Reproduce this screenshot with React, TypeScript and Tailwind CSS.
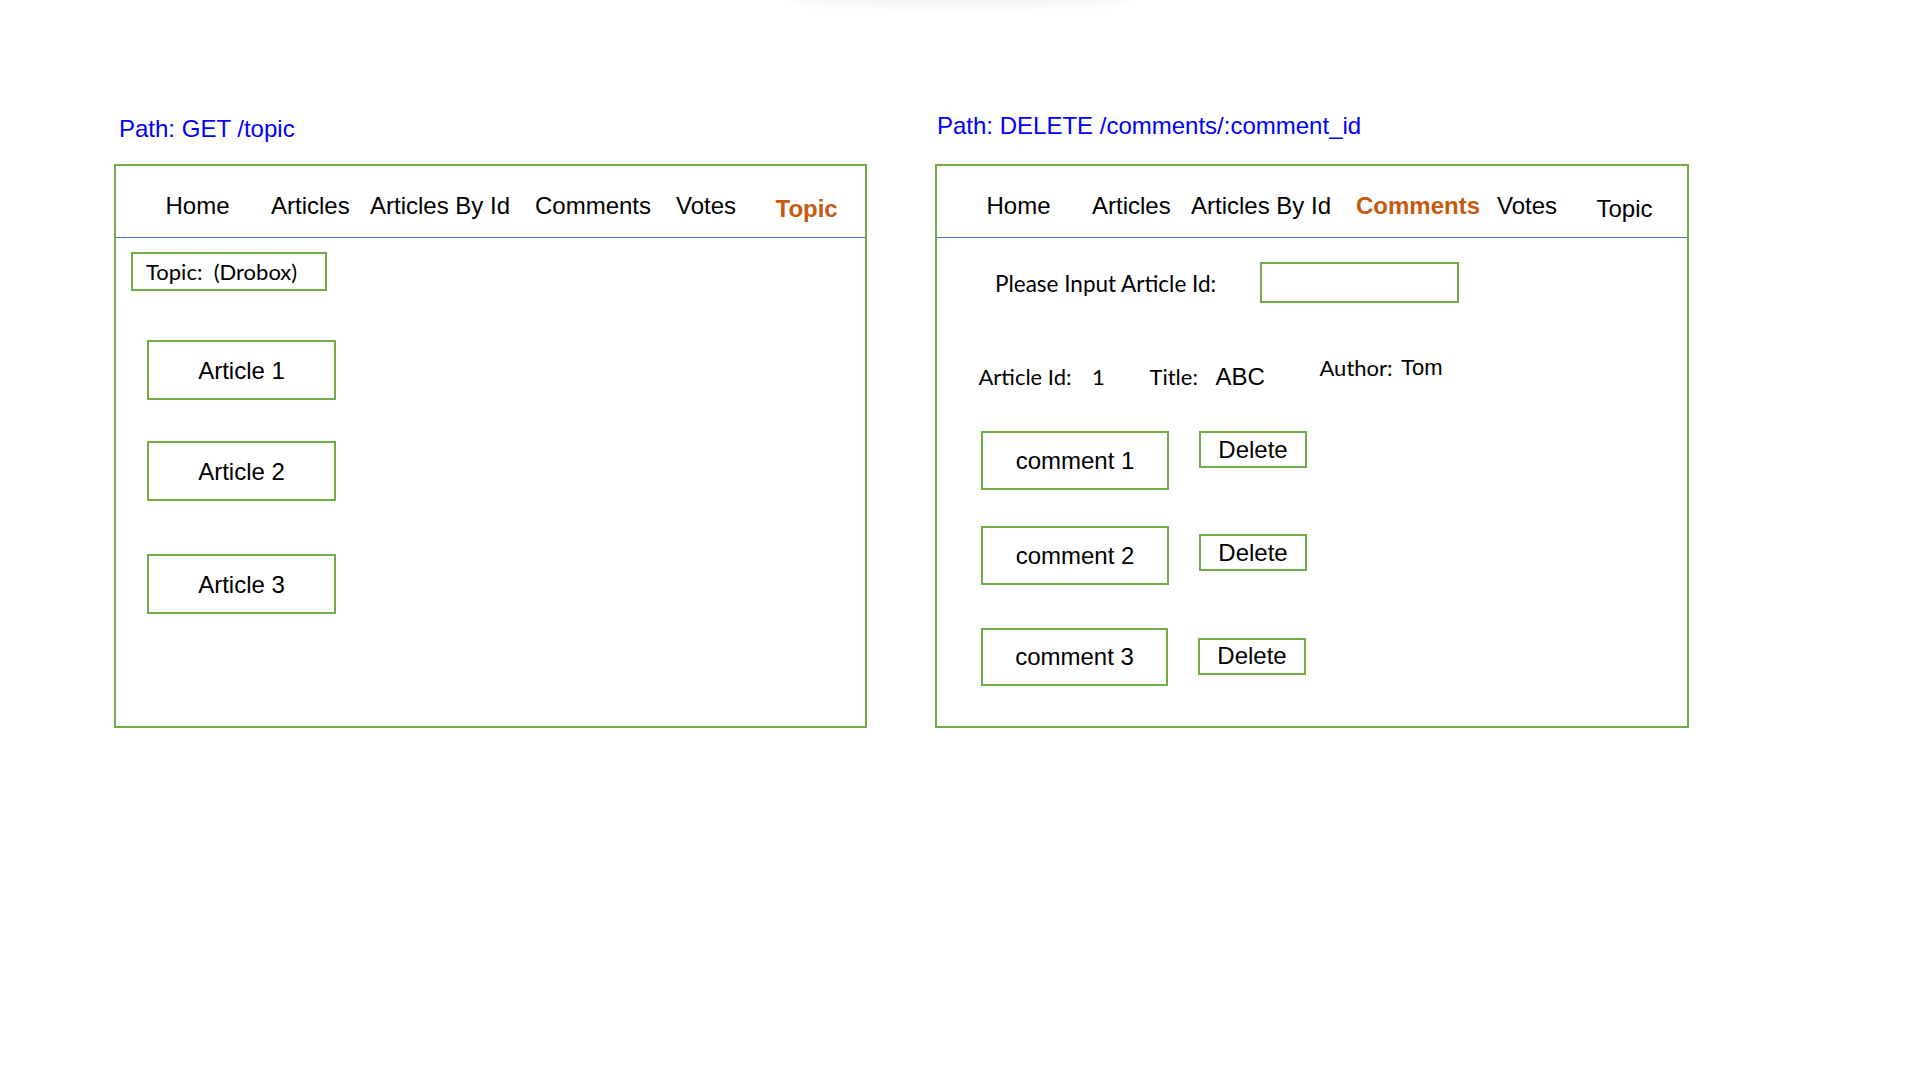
import clsx from "clsx";

const navSlots = [
  { label: "Home", slot: "w-[105.5px]" },
  { label: "Articles", slot: "w-[99px]" },
  { label: "Articles By Id", slot: "w-[165px]" },
  { label: "Comments", slot: "w-[141px]" },
  { label: "Votes", slot: "w-[99.5px]" },
  { label: "Topic", slot: "mt-[2.5px]" },
];

const articles = [
  { label: "Article 1", gap: "mt-[49px]" },
  { label: "Article 2", gap: "mt-[41px]" },
  { label: "Article 3", gap: "mt-[53px]" },
];

const comments = [
  { label: "comment 1", gap: "mt-[40.5px]", box: "h-[59px] w-[188px]", del: "mt-0" },
  { label: "comment 2", gap: "mt-[36px]", box: "h-[59px] w-[188px]", del: "mt-[8px]" },
  { label: "comment 3", gap: "mt-[43px]", box: "h-[58px] w-[187px]", del: "mt-[9.5px]" },
];

const NavBar = ({ active }: { active: string }) => (
  <div className="flex h-[72px] items-start border-b border-[#4472c4] pl-[49.5px] pt-[26px] text-[24px] leading-[28px] text-black">
    {navSlots.map((item) => (
      <span
        key={item.label}
        className={clsx(
          "shrink-0 whitespace-nowrap",
          item.slot,
          item.label === active && "font-bold text-[#c55a11]"
        )}
      >
        {item.label}
      </span>
    ))}
  </div>
);

const TopicPanel = () => (
  <div className="h-[564px] w-[753px] border-2 border-[#70ad47]">
    <NavBar active="Topic" />
    <div className="pl-[15px] pt-[14px]">
      <div className="flex h-[39px] w-[196px] items-center whitespace-pre border-2 border-[#70ad47] pl-[13px] font-['Lato',sans-serif] text-[22px] leading-[26px]">
        Topic:  (Drobox)
      </div>
      {articles.map((a) => (
        <div
          key={a.label}
          className={clsx(
            "ml-[16px] flex h-[60px] w-[189px] items-center justify-center border-2 border-[#70ad47] pt-[1px] text-[24px] leading-[28px]",
            a.gap
          )}
        >
          {a.label}
        </div>
      ))}
    </div>
  </div>
);

const CommentsPanel = () => (
  <div className="h-[564px] w-[754px] border-2 border-[#70ad47]">
    <NavBar active="Comments" />
    <div className="pt-[24px]">
      <div className="flex items-center pl-[58px]">
        <span className="w-[265px] pt-[3px] font-['Lato',sans-serif] text-[22.5px] leading-[28px]">
          Please Input Article Id:
        </span>
        <div className="h-[41px] w-[199px] border-2 border-[#70ad47]" />
      </div>

      <div className="mt-[50.5px] flex items-start pl-[41.5px] text-[22px] leading-[28px]">
        <span className="mt-[9px] w-[113.5px] font-['Lato',sans-serif]">Article Id:</span>
        <span className="mt-[9px] w-[57.5px] font-['Lato',sans-serif]">1</span>
        <span className="mt-[9px] w-[66px] font-['Lato',sans-serif]">Title:</span>
        <span className="mt-[9px] w-[104px] text-[24px]">ABC</span>
        <span className="w-[81.5px] font-['Lato',sans-serif]">Author:</span>
        <span>Tom</span>
      </div>

      {comments.map((c) => (
        <div key={c.label} className={clsx("flex items-start pl-[44px]", c.gap)}>
          <div
            className={clsx(
              "flex items-center justify-center border-2 border-[#70ad47] text-[24px] leading-[28px]",
              c.box
            )}
          >
            {c.label}
          </div>
          <div
            className={clsx(
              "ml-[30px] flex h-[37px] w-[108px] items-center justify-center border-2 border-[#70ad47] text-[24px] leading-[28px]",
              c.del
            )}
          >
            Delete
          </div>
        </div>
      ))}
    </div>
  </div>
);

const App = () => {
  return (
    <div className="relative h-[1080px] w-[1920px] overflow-hidden bg-white font-['Liberation_Sans',Arial,sans-serif] text-black">
      {/* faint shadow left over at the top edge */}
      <div className="absolute left-[790px] top-[-12px] h-[18px] w-[344px] rounded-[50%] bg-[#f2f2f2] blur-[5px]" />

      <div className="flex gap-[68px] pl-[114px]">
        <div className="pt-[115px]">
          <p className="mb-[21px] ml-[5px] text-[24px] leading-[28px] text-[#0000ff]">
            Path: GET /topic
          </p>
          <TopicPanel />
        </div>
        <div className="pt-[112px]">
          <p className="mb-[24px] ml-[2px] text-[24px] leading-[28px] text-[#0000ff]">
            Path: DELETE /comments/:comment_id
          </p>
          <CommentsPanel />
        </div>
      </div>
    </div>
  );
};

export default App;
